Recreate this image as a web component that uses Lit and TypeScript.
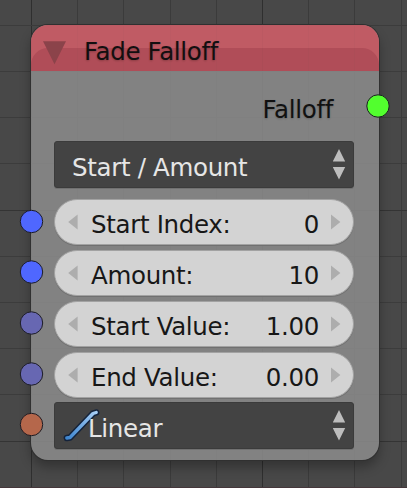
import { LitElement, html, svg, css } from "lit";
import { customElement, property } from "lit/decorators.js";

@customElement("node-select")
class NodeSelect extends LitElement {
  @property() label = "";
  @property({ type: Boolean }) curve = false;
  static styles = css`
    :host { display: block; height: 47px; }
    .box { position: relative; box-sizing: border-box; height: 47px; display: flex; align-items: flex-start; justify-content: space-between;
      padding: 3px 7px 0 17px; border: 1px solid #3b3b3b; border-radius: 3px; background: #434343; color: #e6e6e6;
      box-shadow: 0 1px 0 #717171; }
    .box.curve { padding-left: 33px; }
    .text { line-height: 46px; white-space: pre; position: relative; }
    .arrows { width: 13px; height: 32px; margin-top: 3px; fill: #bdbdbd; }
    .icon { position: absolute; left: 7px; top: 4px; width: 42px; height: 38px; }
  `;
  render() {
    return html`<div class="box ${this.curve ? "curve" : ""}">
      ${this.curve ? html`<svg class="icon" viewBox="0 0 42 38">
        <defs><linearGradient id="g" x1="0" y1="1" x2="1" y2="0"><stop offset="0" stop-color="#3f86cf"/><stop offset="1" stop-color="#a5cdf5"/></linearGradient></defs>
        <path d="M4.800 31L8 30.500L31 6.500L34.200 5.500" fill="none" stroke="#14233b" stroke-width="6.400" stroke-linecap="round" stroke-linejoin="round"/>
        <path d="M4.800 31L8 30.500L31 6.500L34.200 5.500" fill="none" stroke="url(#g)" stroke-width="3.400" stroke-linecap="round" stroke-linejoin="round"/>
      </svg>` : ""}
      <span class="text">${this.label}</span>
      <svg class="arrows" viewBox="0 0 13 32"><path d="M6 1L12.200 13.500H-.2ZM-.2 19H12.200L6 31.500Z"/></svg>
    </div>`;
  }
}

@customElement("node-number")
class NodeNumber extends LitElement {
  @property() label = "";
  @property() value = "";
  static styles = css`
    :host { display: block; height: 46px; }
    .box { box-sizing: border-box; height: 46px; display: flex; align-items: flex-start; padding: 3px 12px 0 13px;
      border: 1px solid #a2a2a2; border-radius: 23px; background: #d3d3d3; color: #171717; box-shadow: 0 1px 0 #707070; }
    .text { line-height: 44px; white-space: pre; }
    .label { flex: 1; margin-left: 13px; }
    .value { margin-right: 12px; }
    .arrow { width: 10px; height: 16px; margin-top: 11px; fill: #adadad; }
  `;
  render() {
    return html`<div class="box">
      <svg class="arrow" viewBox="0 0 10 16"><path d="M9.600 .5V15.500L.2 8Z"/></svg>
      <span class="text label">${this.label}</span>
      <span class="text value">${this.value}</span>
      <svg class="arrow" viewBox="0 0 10 16"><path d="M0 .5V15.500L9.400 8Z"/></svg>
    </div>`;
  }
}

const GRID_X = [31, 77, 123, 170, 216, 262, 308, 354, 401];
const GRID_Y = [25, 71, 117, 163, 210, 256, 302, 348, 394, 441];
const SOCKETS = [
  { x: 378, y: 106, color: "#52ff2e" },
  { x: 31.5, y: 221.500, color: "#4f67ff" },
  { x: 31.5, y: 272, color: "#4f67ff" },
  { x: 31.5, y: 323, color: "#6767b2" },
  { x: 31.5, y: 374, color: "#6767b2" },
  { x: 31.5, y: 424.500, color: "#b5674b" },
];

@customElement("app-root")
class AppRoot extends LitElement {
  static styles = css`
    :host { display: block; position: relative; width: 407px; height: 488px; overflow: hidden; background: #484848;
      font: 24.5px "DejaVu Sans", sans-serif; letter-spacing: -0.33px; }
    .layer { position: absolute; inset: 0; width: 407px; height: 488px; pointer-events: none; }
    .canvas { padding: 25px 28px 28px 31px; }
    .node { position: relative; box-sizing: border-box; width: 348px; height: 435px; border-radius: 17px; background: #838383;
      box-shadow: 0 0 0 1px #303030, 0 7px 12px rgba(0,0,0,.3); overflow: hidden; }
    .mesh { position: absolute; left: -31px; top: -25px; width: 407px; height: 488px; }
    .header { position: relative; height: 46px; display: flex; background: #c05b65; color: #141011; overflow: hidden; }
    .shade { position: absolute; left: 0; top: 23px; width: 348px; height: 60px; border-radius: 17px; background: #b04e58; }
    .fold { position: relative; width: 24px; height: 24px; margin: 16px 0 0 12px; fill: #8c444b; }
    .title { position: relative; line-height: 46px; margin: 4px 0 0 17px; text-shadow: 0 1px 2px rgba(0,0,0,.2); }
    .output { position: relative; height: 70px; padding-right: 46px; text-align: right; line-height: 78px; color: #111; text-shadow: 0 1px 2px rgba(0,0,0,.2); }
    .fields { position: relative; padding: 0 25px 0 23px; display: flex; flex-direction: column; }
    .numbers { display: flex; flex-direction: column; gap: 5px; margin: 11px 0 4px; }
  `;
  private lines(opacity: number) {
    return svg`<g opacity=${opacity} shape-rendering="crispEdges">
      ${GRID_X.map((x) => svg`<rect x=${x} y="0" width="1" height="488" fill=${x === 31 || x === 262 ? "#2f2f2f" : "#3b3b3b"}/>`)}
      ${GRID_Y.map((y) => svg`<rect x="0" y=${y} width="407" height="1" fill=${y === 210 || y === 441 ? "#343434" : "#3c3c3c"}/>`)}
      <rect x="0" y="487" width="407" height="1" fill="#45373b"/>
    </g>`;
  }
  render() {
    return html`
      <svg class="layer">${this.lines(1)}</svg>
      <div class="canvas">
        <div class="node">
          <div class="header">
            <div class="shade"></div>
            <svg class="fold" viewBox="0 0 24 24"><path d="M0 .3H23L11.500 23.300Z"/></svg>
            <span class="title">Fade Falloff</span>
          </div>
          <svg class="mesh">${this.lines(0.03)}</svg>
          <div class="output">Falloff</div>
          <div class="fields">
            <node-select label="Start / Amount"></node-select>
            <div class="numbers">
              <node-number label="Start Index:" value="0"></node-number>
              <node-number label="Amount:" value="10"></node-number>
              <node-number label="Start Value:" value="1.00"></node-number>
              <node-number label="End Value:" value="0.00"></node-number>
            </div>
            <node-select label="Linear" curve></node-select>
          </div>
        </div>
      </div>
      <svg class="layer">
        ${SOCKETS.map((s) => svg`<circle cx=${s.x} cy=${s.y} r="11.200" fill=${s.color} stroke="#1c1c24" stroke-width="1"/>`)}
      </svg>`;
  }
}
